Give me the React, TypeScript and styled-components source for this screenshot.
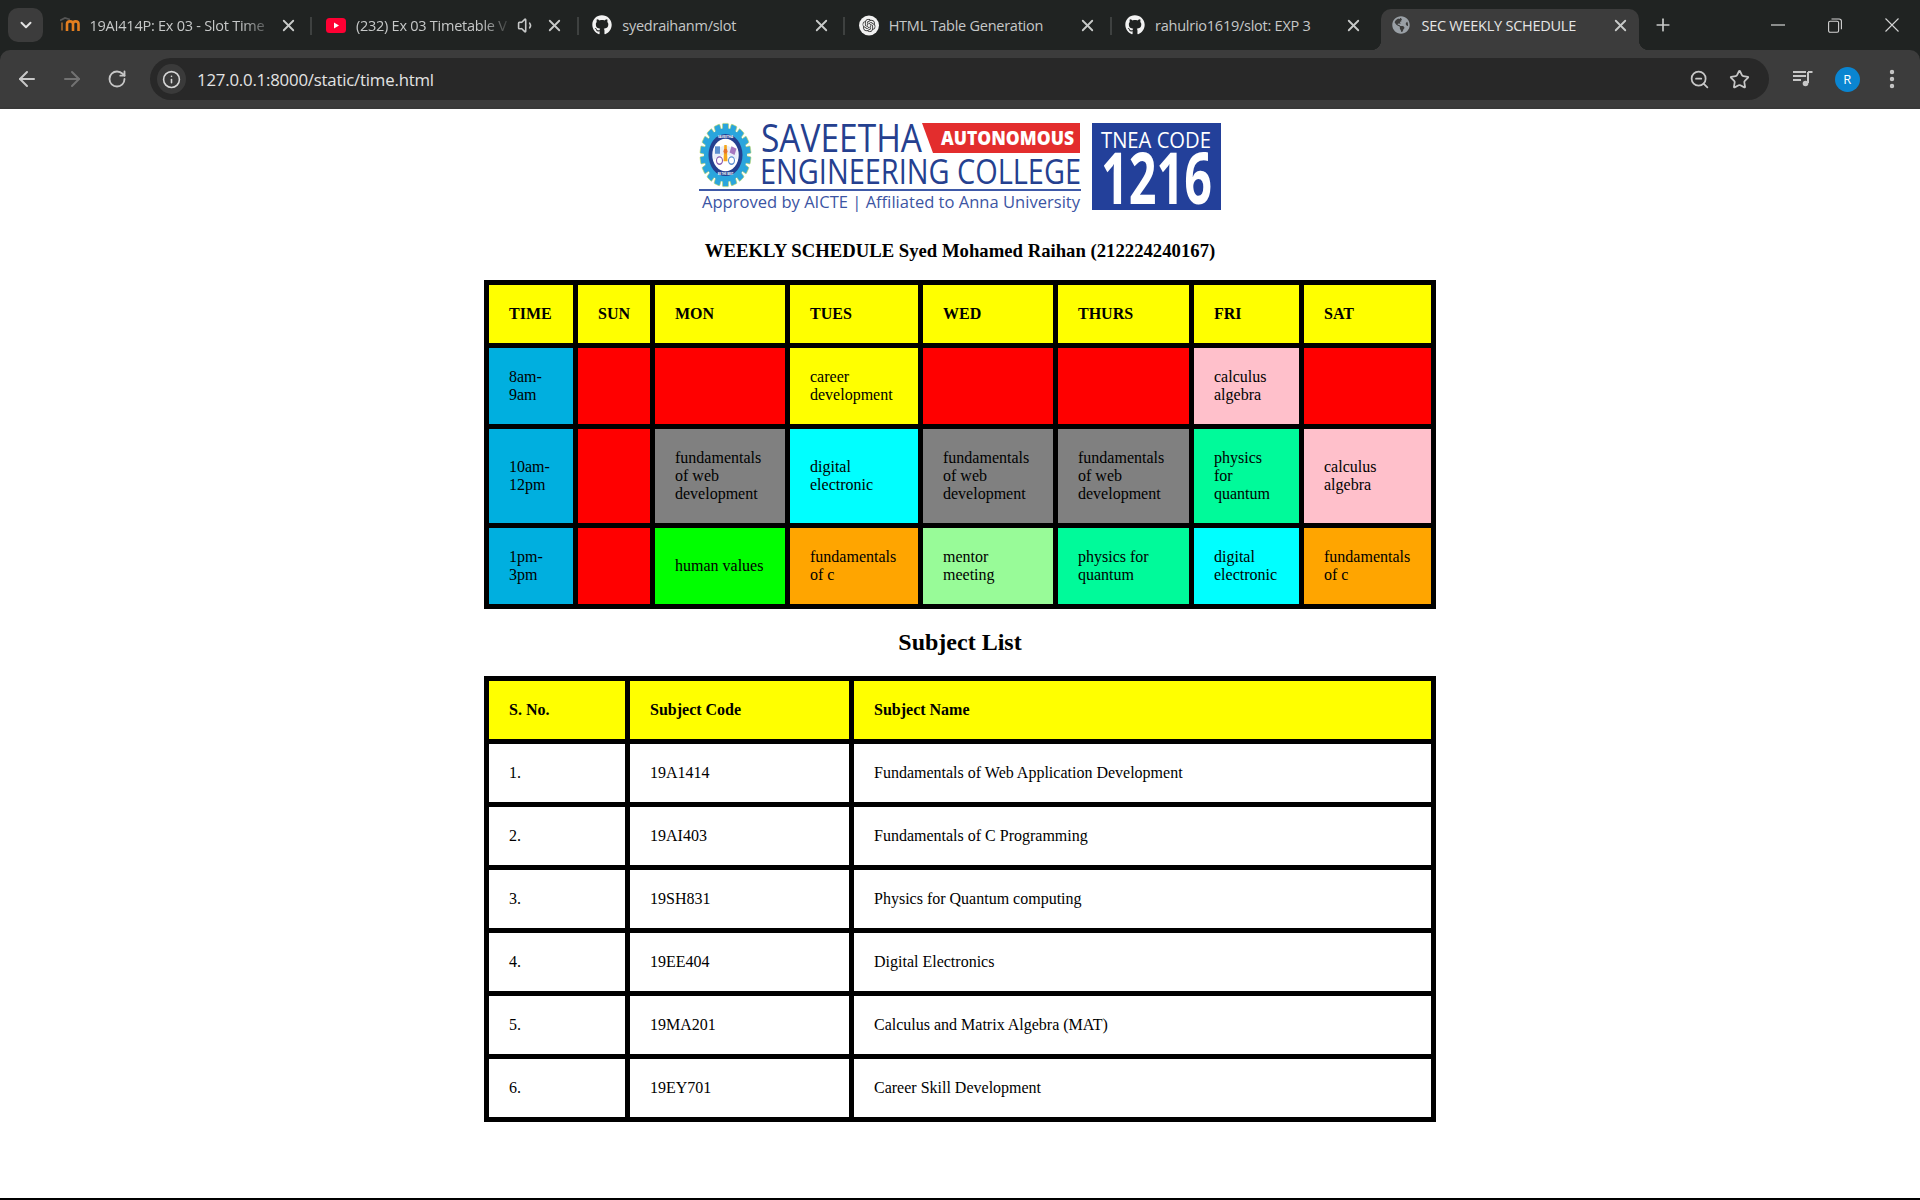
import React from "react";
import styled, { createGlobalStyle } from "styled-components";
import { ArrowLeft, ArrowRight, ChevronDown, EllipsisVertical, Info, Plus, RotateCw, Star, Volume1, X, ZoomOut } from "lucide-react";
import { FaGithub, FaGlobeAmericas } from "react-icons/fa";
import { SiOpenai } from "react-icons/si";

const GlobalStyle = createGlobalStyle`
  html, body { margin: 0; padding: 0; background: #fff; }
  #root { width: 1920px; height: 1200px; overflow: hidden; }
`;

const Screen = styled.div`
  width: 1920px;
  height: 1200px;
  display: flex;
  flex-direction: column;
  background: #fff;
`;

const TabStrip = styled.div`
  height: 50px;
  flex: none;
  display: flex;
  align-items: stretch;
  background: #202322;
  font-family: "Open Sans", "Noto Sans", sans-serif;
`;

const TabSearch = styled.button`
  flex: none;
  width: 35px;
  height: 34px;
  margin: 8px 2px 0 8px;
  padding: 0;
  border: 0;
  border-radius: 10px;
  background: #3c3c3c;
  color: #e3e3e3;
  display: flex;
  align-items: center;
  justify-content: center;
`;

const TabItem = styled.div<{ $active?: boolean; $last?: boolean }>`
  position: relative;
  flex: none;
  width: 266.4px;
  box-sizing: border-box;
  padding: 0 13px 0 14.5px;
  display: flex;
  align-items: center;
  font-size: 14.5px;
  letter-spacing: -0.25px;
  color: ${(p) => (p.$active ? "#e6e6e6" : "#c6c8c8")};
  &::after {
    content: "";
    display: ${(p) => (p.$last ? "none" : "block")};
    position: absolute;
    right: -1px;
    top: 17px;
    width: 2px;
    height: 18px;
    background: #3e4140;
  }
`;

const ActiveShape = styled.div`
  position: absolute;
  left: 4px;
  right: 4px;
  top: 9px;
  bottom: 0;
  background: #3c3c3c;
  border-radius: 10px 10px 0 0;
  &::before, &::after {
    content: "";
    position: absolute;
    bottom: 0;
    width: 10px;
    height: 10px;
  }
  &::before {
    left: -10px;
    background: radial-gradient(circle at 0 0, transparent 10px, #3c3c3c 10.5px);
  }
  &::after {
    right: -10px;
    background: radial-gradient(circle at 100% 0, transparent 10px, #3c3c3c 10.5px);
  }
`;

const TabIcon = styled.span`
  position: relative;
  flex: none;
  width: 20px;
  height: 20px;
  margin-right: 10px;
  display: flex;
  align-items: center;
  justify-content: center;
`;

const TabTitle = styled.span<{ $fade?: boolean }>`
  position: relative;
  flex: 1;
  min-width: 0;
  white-space: nowrap;
  ${(p) => (p.$fade ? "mask-image: linear-gradient(to right, #000 80%, transparent 100%);" : "")}
`;

const TabAudio = styled.span`
  flex: none;
  width: 20px;
  margin: 0 8px 0 4px;
  display: flex;
  align-items: center;
  justify-content: center;
  color: #c6c8c8;
`;

const TabClose = styled.span`
  position: relative;
  flex: none;
  width: 20px;
  height: 20px;
  display: flex;
  align-items: center;
  justify-content: center;
  color: #c8cac9;
`;

const NewTab = styled.div`
  flex: none;
  width: 40px;
  display: flex;
  align-items: center;
  justify-content: center;
  color: #c8cac9;
`;

const WindowControls = styled.div`
  margin-left: auto;
  display: flex;
`;

const WindowButton = styled.div`
  width: 57px;
  display: flex;
  align-items: center;
  justify-content: center;
  color: #d4d4d4;
`;

const Toolbar = styled.div`
  height: 59px;
  flex: none;
  box-sizing: border-box;
  padding: 0 6px 1px 4.5px;
  display: flex;
  align-items: center;
  background: #3c3c3c;
  border-radius: 10px 10px 0 0;
  box-shadow: inset 0 -2px 0 #393939;
  position: relative;
  z-index: 1;
`;

const ToolbarStack = styled.div`
  flex: none;
  background: #202322;
`;

const NavButton = styled.div<{ $dim?: boolean }>`
  flex: none;
  width: 45px;
  display: flex;
  align-items: center;
  justify-content: center;
  color: ${(p) => (p.$dim ? "#727272" : "#c7c7c7")};
`;

const AddressBar = styled.div`
  flex: 1;
  height: 42px;
  margin: 0 12px 0 10.5px;
  box-sizing: border-box;
  padding: 0 9px 0 7px;
  display: flex;
  align-items: center;
  background: #282828;
  border-radius: 21px;
  font-family: "Open Sans", "Noto Sans", sans-serif;
`;

const SiteInfo = styled.div`
  flex: none;
  width: 29px;
  height: 30px;
  border-radius: 50%;
  background: #3a3a3a;
  color: #d6d6d6;
  display: flex;
  align-items: center;
  justify-content: center;
  margin-right: 11px;
`;

const AddressText = styled.div`
  flex: 1;
  font-size: 16.8px;
  letter-spacing: -0.2px;
  color: #e3e3e3;
`;

const AddressAction = styled.div`
  flex: none;
  width: 40px;
  display: flex;
  align-items: center;
  justify-content: center;
  color: #c7c7c7;
`;

const ToolButton = styled.div`
  flex: none;
  width: 44.5px;
  display: flex;
  align-items: center;
  justify-content: center;
  color: #c7c7c7;
`;

const Avatar = styled.div`
  width: 25px;
  height: 25px;
  border-radius: 50%;
  background: #0a85d1;
  color: #fff;
  font: 400 13px "Open Sans", sans-serif;
  display: flex;
  align-items: center;
  justify-content: center;
`;

const Page = styled.main`
  flex: 1;
  min-height: 0;
  padding-top: 13px;
  display: flex;
  flex-direction: column;
  align-items: center;
  background: #fff;
  color: #000;
  font-family: "Liberation Serif", "Times New Roman", serif;
  font-size: 16px;
`;

const LogoSvg = styled.svg`
  display: block;
  flex: none;
  width: 523px;
  height: 88px;
  overflow: visible;
`;

const ScheduleHeading = styled.h3`
  margin: 30px 0 18px;
  font-size: 18.72px;
  line-height: 22px;
  font-weight: 700;
  text-align: center;
`;

const SubjectHeading = styled.h2`
  margin: 19px 0 20px;
  font-size: 24px;
  line-height: 28px;
  font-weight: 700;
  text-align: center;
`;

const Table = styled.table`
  flex: none;
  width: 952px;
  table-layout: fixed;
  border-collapse: collapse;
  border: 5px solid #000;
  line-height: 18px;
`;

const HeadCell = styled.th`
  padding: 20px;
  border: 5px solid #000;
  background: #ffff00;
  text-align: left;
  vertical-align: middle;
  font-weight: 700;
`;

const BodyCell = styled.td<{ $bg?: string }>`
  padding: 20px;
  border: 5px solid #000;
  background: ${(p) => p.$bg || "#fff"};
  text-align: left;
  vertical-align: middle;
`;

const BottomEdge = styled.div`
  flex: none;
  height: 2px;
  background: #000;
`;

const TextSans = styled.text`
  font-family: "Open Sans", "Noto Sans", sans-serif;
`;

const Moodle = () => (
  <svg width="20" height="16" viewBox="0 0 20 16" fill="none">
    <path d="M0 3.5 L5 1 L10 2.5" stroke="#555" strokeWidth="1.8" />
    <path d="M2 5.5v8" stroke="#8a5a2a" strokeWidth="2" />
    <path d="M7 14V7c0-1.8.8-2.6 3-2.6s3 .8 3 2.6v7M13 7c0-1.8.8-2.6 2.5-2.6S18.5 5.2 18.5 7v7" stroke="#e57f1f" strokeWidth="2.6" />
  </svg>
);

const YouTube = () => (
  <svg width="20" height="15" viewBox="0 0 20 15">
    <rect width="20" height="15" rx="3.5" fill="#ff0033" />
    <path d="M8 4.5v6l5-3z" fill="#fff" />
  </svg>
);

const Chat = () => (
  <svg width="21" height="21" viewBox="0 0 21 21">
    <circle cx="10.5" cy="10.5" r="10.5" fill="#f1f1f1" />
    <g transform="translate(3.5 3.5) scale(0.583)">
      <SiOpenai size={24} color="#3a3a3a" />
    </g>
  </svg>
);

const Restore = () => (
  <svg width="14" height="15" viewBox="0 0 14 15" fill="none" stroke="currentColor" strokeWidth="1.1">
    <rect x="0.6" y="3.2" width="10" height="11" rx="1.5" />
    <path d="M3.5 1h7.6a2.3 2.3 0 0 1 2.3 2.3v8" />
  </svg>
);

const WinClose = () => (
  <svg width="14" height="14" viewBox="0 0 14 14" stroke="currentColor" strokeWidth="1.1">
    <path d="M0.5 0.5l13 13M13.5 0.5l-13 13" />
  </svg>
);

const WinMin = () => (
  <svg width="14" height="2" viewBox="0 0 14 2" stroke="currentColor" strokeWidth="1.2">
    <path d="M0 1h14" />
  </svg>
);

const MediaIcon = () => (
  <svg width="20" height="18" viewBox="0 0 20 18" fill="none" stroke="currentColor" strokeWidth="2">
    <path d="M0 2h13M0 6h13M0 10h8" />
    <path d="M15 2v11" />
    <path d="M15 2h4.5" />
    <circle cx="12.5" cy="13.5" r="2.8" fill="currentColor" stroke="none" />
  </svg>
);

const Emblem = () => {
  const teeth = Array.from({ length: 18 }, (_, i) => (i * 360) / 18);
  return (
    <g transform="translate(26.5 33) scale(1 1.24)">
      {teeth.map((a) => (
        <rect key={a} x="-3" y="-25.5" width="6" height="6" rx="0.8" fill="#2aa5dd" stroke="#c2d860" strokeWidth="0.5" transform={`rotate(${a})`} />
      ))}
      <circle r="21.5" fill="#2aa5dd" />
      <circle r="17" fill="#243f8f" />
      <circle r="13.2" fill="#fff" />
      <path d="M-12 4 L0 -1 L12 4 L12 -4 L0 -8 L-12 -4z" fill="#e9eef8" />
      <rect x="-10.5" y="-7" width="5" height="6" fill="#5b8fd0" />
      <path d="M6 -7l5 2-2 5-5-2z" fill="#a678c0" />
      <circle cx="-6" cy="4.5" r="3" fill="none" stroke="#8a5cb0" strokeWidth="1.1" />
      <circle cx="6" cy="4.5" r="3" fill="none" stroke="#5b8fd0" strokeWidth="1.1" />
      <path d="M-1.2 -8h2.4l.8 13h-4z" fill="#f5a81c" />
      <circle cy="-3" r="2" fill="#e8762a" />
      <TextSans x="0" y="-14" textAnchor="middle" fontSize="3" fontWeight="700" fill="#fff">SAVEETHA</TextSans>
      <TextSans x="0" y="16" textAnchor="middle" fontSize="2.6" fontWeight="700" fill="#fff">BE THE BEST</TextSans>
    </g>
  );
};

const Logo = () => (
  <LogoSvg viewBox="0 0 523 88" role="img" aria-label="Saveetha Engineering College logo">
    <Emblem />
    <TextSans x="62" y="30" fontSize="38" fontWeight="500" fill="#25408f" textLength="161" lengthAdjust="spacingAndGlyphs">SAVEETHA</TextSans>
    <path d="M223 1H381V31H234z" fill="#e32d2d" />
    <TextSans x="242" y="23" fontSize="19" fontWeight="800" fill="#fff" textLength="133" lengthAdjust="spacingAndGlyphs">AUTONOMOUS</TextSans>
    <TextSans x="61" y="62" fontSize="34" fontWeight="500" fill="#25408f" textLength="321" lengthAdjust="spacingAndGlyphs">ENGINEERING COLLEGE</TextSans>
    <rect x="0" y="67" width="382" height="2" fill="#3f5aa8" />
    <TextSans x="3" y="86" fontSize="15.5" fill="#3c55a3" textLength="378" lengthAdjust="spacingAndGlyphs">Approved by AICTE  |  Affiliated to Anna University</TextSans>
    <rect x="393" y="1" width="129" height="87" fill="#23409a" />
    <TextSans x="402" y="26" fontSize="21" fill="#fff" textLength="110" lengthAdjust="spacingAndGlyphs">TNEA CODE</TextSans>
    <TextSans x="402" y="82" fontSize="72" fontWeight="700" fill="#fff" textLength="111" lengthAdjust="spacingAndGlyphs">1216</TextSans>
  </LogoSvg>
);

const C = {
  time: "#00afdf",
  red: "#ff0000",
  yellow: "#ffff00",
  pink: "#ffc0cb",
  gray: "#808080",
  cyan: "#00ffff",
  mint: "#00fa9a",
  lime: "#00ff00",
  orange: "#ffa500",
  pale: "#98fb98",
};

const web = "fundamentals of web development";

const scheduleCols = [89, 77, 135, 133, 135, 136, 110, 132];
const scheduleHead = ["TIME", "SUN", "MON", "TUES", "WED", "THURS", "FRI", "SAT"];
const scheduleRows: [string, string][][] = [
  [["8am-9am", C.time], ["", C.red], ["", C.red], ["career development", C.yellow], ["", C.red], ["", C.red], ["calculus algebra", C.pink], ["", C.red]],
  [["10am-12pm", C.time], ["", C.red], [web, C.gray], ["digital electronic", C.cyan], [web, C.gray], [web, C.gray], ["physics for quantum", C.mint], ["calculus algebra", C.pink]],
  [["1pm-3pm", C.time], ["", C.red], ["human values", C.lime], ["fundamentals of c", C.orange], ["mentor meeting", C.pale], ["physics for quantum", C.mint], ["digital electronic", C.cyan], ["fundamentals of c", C.orange]],
];

const subjectCols = [141, 224, 582];
const subjects = [
  ["1.", "19A1414", "Fundamentals of Web Application Development"],
  ["2.", "19AI403", "Fundamentals of C Programming"],
  ["3.", "19SH831", "Physics for Quantum computing"],
  ["4.", "19EE404", "Digital Electronics"],
  ["5.", "19MA201", "Calculus and Matrix Algebra (MAT)"],
  ["6.", "19EY701", "Career Skill Development"],
];

const tabs: { icon: React.ReactNode; title: string; fade?: boolean; audio?: boolean; active?: boolean }[] = [
  { icon: <Moodle />, title: "19AI414P: Ex 03 - Slot Time", fade: true },
  { icon: <YouTube />, title: "(232) Ex 03 Timetable V", fade: true, audio: true },
  { icon: <FaGithub size={20} color="#f2f2f2" />, title: "syedraihanm/slot" },
  { icon: <Chat />, title: "HTML Table Generation" },
  { icon: <FaGithub size={20} color="#f2f2f2" />, title: "rahulrio1619/slot: EXP 3" },
  { icon: <FaGlobeAmericas size={18} color="#9aa0a6" />, title: "SEC WEEKLY SCHEDULE", active: true },
];

export default function App() {
  return (
    <Screen>
      <GlobalStyle />
      <TabStrip>
        <TabSearch aria-label="Search tabs"><ChevronDown size={18} strokeWidth={2.6} /></TabSearch>
        {tabs.map((t, i) => (
          <TabItem key={t.title} $active={t.active} $last={i >= tabs.length - 2}>
            {t.active && <ActiveShape />}
            <TabIcon>{t.icon}</TabIcon>
            <TabTitle $fade={t.fade}>{t.title}</TabTitle>
            {t.audio && <TabAudio><Volume1 size={19} /></TabAudio>}
            <TabClose><X size={19} strokeWidth={2.3} /></TabClose>
          </TabItem>
        ))}
        <NewTab><Plus size={20} strokeWidth={2} /></NewTab>
        <WindowControls>
          <WindowButton><WinMin /></WindowButton>
          <WindowButton><Restore /></WindowButton>
          <WindowButton><WinClose /></WindowButton>
        </WindowControls>
      </TabStrip>
      <ToolbarStack>
        <Toolbar>
          <NavButton><ArrowLeft size={24} strokeWidth={2} /></NavButton>
          <NavButton $dim><ArrowRight size={24} strokeWidth={2} /></NavButton>
          <NavButton><RotateCw size={20} strokeWidth={2.2} /></NavButton>
          <AddressBar>
            <SiteInfo><Info size={19} strokeWidth={2} /></SiteInfo>
            <AddressText>127.0.0.1:8000/static/time.html</AddressText>
            <AddressAction><ZoomOut size={21} strokeWidth={2} /></AddressAction>
            <AddressAction><Star size={21} strokeWidth={2} /></AddressAction>
          </AddressBar>
          <ToolButton><MediaIcon /></ToolButton>
          <ToolButton><Avatar>R</Avatar></ToolButton>
          <ToolButton><EllipsisVertical size={24} strokeWidth={2.4} /></ToolButton>
        </Toolbar>
      </ToolbarStack>
      <Page>
        <Logo />
        <ScheduleHeading>WEEKLY SCHEDULE Syed Mohamed Raihan (212224240167)</ScheduleHeading>
        <Table>
          <colgroup>
            {scheduleCols.map((w, i) => <col key={i} style={{ width: w }} />)}
          </colgroup>
          <thead>
            <tr>{scheduleHead.map((h) => <HeadCell key={h}>{h}</HeadCell>)}</tr>
          </thead>
          <tbody>
            {scheduleRows.map((r, i) => (
              <tr key={i}>
                {r.map(([text, bg], j) => <BodyCell key={j} $bg={bg}>{text}</BodyCell>)}
              </tr>
            ))}
          </tbody>
        </Table>
        <SubjectHeading>Subject List</SubjectHeading>
        <Table>
          <colgroup>
            {subjectCols.map((w, i) => <col key={i} style={{ width: w }} />)}
          </colgroup>
          <thead>
            <tr>
              <HeadCell>S. No.</HeadCell>
              <HeadCell>Subject Code</HeadCell>
              <HeadCell>Subject Name</HeadCell>
            </tr>
          </thead>
          <tbody>
            {subjects.map((s) => (
              <tr key={s[0]}>
                {s.map((v) => <BodyCell key={v}>{v}</BodyCell>)}
              </tr>
            ))}
          </tbody>
        </Table>
      </Page>
      <BottomEdge />
    </Screen>
  );
}
